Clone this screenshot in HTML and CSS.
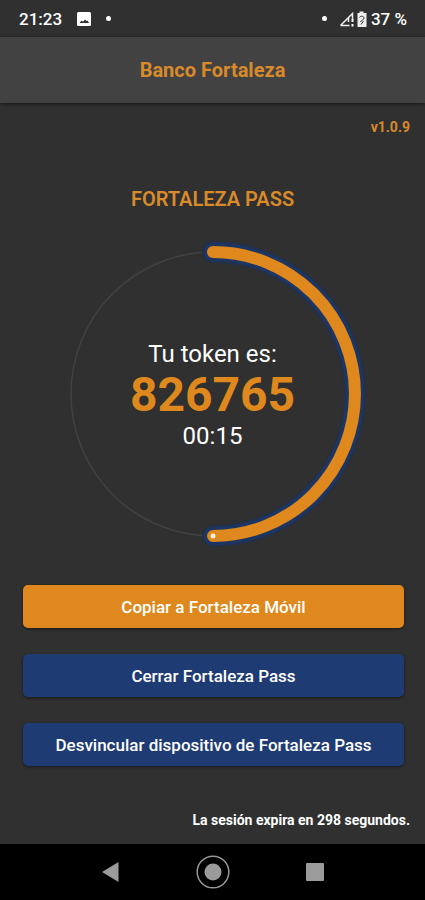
FILE: index.html
```html
<!DOCTYPE html>
<html lang="es">
<head>
<meta charset="utf-8">
<meta name="viewport" content="width=device-width, initial-scale=1">
<title>Banco Fortaleza</title>
<link rel="stylesheet" href="styles.css">
</head>
<body>
<div class="status-bar">
  <div class="status-group">
    <span>21:23</span>
    <svg class="photo-icon" viewBox="0 0 16 16" width="16" height="16" aria-hidden="true"><rect x="1" y="1" width="14" height="14" rx="1.500" fill="#fff"/><path d="M3.500 12l2-2.500 1.500 1.200 2-2.200 1.500 1.500 1-.5 1.500 2.500z" fill="#303030"/></svg>
    <span class="dot"></span>
  </div>
  <div class="status-group status-right">
    <span class="dot"></span>
    <svg class="signal-icon" viewBox="0 0 28 16" width="28" height="16" aria-hidden="true">
      <path d="M1.500 14.500L13.500 2.500v6M1.500 14.500H10.500M9.500 7v4" fill="none" stroke="#eee" stroke-width="1.500"/>
      <path d="M13.500 8v3M13.500 13v2.500" stroke="#fff" stroke-width="2"/>
      <path d="M20.500 .5h4V2H27.500V16h-9V2h2z" fill="#eee"/>
      <path d="M20.500 6.500c1-2 4.500-1.500 4.500 .5S22.500 8.500 21.500 11M24.500 10l-2.500 3.500" fill="none" stroke="#303030" stroke-width="1"/>
    </svg>
    <span>37 %</span>
  </div>
</div>
<header class="app-bar"><h1>Banco Fortaleza</h1></header>
<main class="content">
  <p class="version">v1.0.9</p>
  <h2 class="title">FORTALEZA PASS</h2>
  <section class="token">
    <svg class="ring" viewBox="0 0 310 310" aria-hidden="true">
      <circle cx="155" cy="155" r="142" fill="none" stroke="#424242" stroke-width="1.500"/>
      <g fill="none" stroke-linecap="round">
        <path d="M155 13a142 142 0 0 1 0 284" stroke="#253043" stroke-width="22"/>
        <path d="M155 13a142 142 0 0 1 0 284" stroke="#1d3562" stroke-width="19"/>
        <path d="M155 13a142 142 0 0 1 0 284" stroke="#de881d" stroke-width="12"/>
      </g>
      <circle cx="155" cy="297" r="2.500" fill="#fff0d8"/>
    </svg>
    <div class="token-text">
      <p class="token-label">Tu token es:</p>
      <p class="token-code">826765</p>
      <p class="token-label">00:15</p>
    </div>
  </section>
  <div class="actions">
    <button class="button primary" type="button">Copiar a Fortaleza Móvil</button>
    <button class="button" type="button">Cerrar Fortaleza Pass</button>
    <button class="button" type="button">Desvincular dispositivo de Fortaleza Pass</button>
  </div>
  <p class="session">La sesión expira en 298 segundos.</p>
</main>
<nav class="nav-bar">
  <button class="nav-button" type="button" aria-label="Atrás"><svg viewBox="0 0 36 36" width="36" height="36"><path d="M9 18L25.500 8v20z" fill="#9b9b9b"/></svg></button>
  <button class="nav-button" type="button" aria-label="Inicio"><svg viewBox="0 0 36 36" width="36" height="36"><circle cx="18" cy="18" r="15.800" fill="none" stroke="#999" stroke-width="1.500"/><circle cx="18" cy="18" r="8.500" fill="#9b9b9b"/></svg></button>
  <button class="nav-button" type="button" aria-label="Recientes"><svg viewBox="0 0 36 36" width="36" height="36"><rect x="9" y="9" width="18" height="18" rx="1" fill="#9b9b9b"/></svg></button>
</nav>
</body>
</html>
```
FILE: styles.css
```css
* { box-sizing: border-box; }
body {
  margin: 0;
  min-height: 100vh;
  display: flex;
  flex-direction: column;
  background: #303030;
  color: #fff;
  font-family: Roboto, sans-serif;
}
h1, h2, p { margin: 0; }
.status-bar {
  display: flex;
  justify-content: space-between;
  align-items: center;
  height: 37px;
  padding: 0 18px 0 19px;
  font-size: 17px;
  font-weight: 500;
}
.status-group { display: flex; align-items: center; gap: 14px; }
.status-right { gap: 12px; }
.status-right .signal-icon { margin-right: -8px; }
.dot { width: 5px; height: 5px; border-radius: 50%; background: #fff; }
.app-bar {
  display: flex;
  align-items: center;
  justify-content: center;
  height: 66px;
  background: #424242;
  box-shadow: 0 1px 4px rgba(0, 0, 0, 0.6);
}
h1 { font-size: 20px; line-height: 24px; font-weight: 700; color: #d98a2b; }
.content { flex: 1; display: flex; flex-direction: column; }
.version {
  padding: 16px 15px 0;
  text-align: right;
  font-size: 14px;
  line-height: 16px;
  font-weight: 700;
  color: #d98a2b;
}
.title {
  margin-top: 52px;
  text-align: center;
  font-size: 20px;
  line-height: 24px;
  font-weight: 600;
  color: #d98a2b;
}
.token { display: grid; place-items: center; margin-top: 28px; }
.token > * { grid-area: 1 / 1; }
.ring { width: 310px; height: 310px; }
.token-text { padding-top: 2px; text-align: center; }
.token-label { font-size: 24px; line-height: 30px; }
.token-code { font-size: 48px; line-height: 52px; font-weight: 700; color: #de881d; }
.actions { display: grid; gap: 26px; margin-top: 36px; padding: 0 21px 0 23px; }
.button {
  height: 43px;
  border: 0;
  border-radius: 5px;
  background: #1f3b73;
  color: #fff;
  font: 500 17px/20px Roboto, sans-serif;
  box-shadow: 0 1px 3px rgba(0, 0, 0, 0.5);
}
.button.primary { background: #de881d; }
.session {
  margin-top: auto;
  padding: 0 15px 16px;
  text-align: right;
  font-size: 14px;
  line-height: 16px;
  font-weight: 700;
}
.nav-bar {
  display: flex;
  align-items: center;
  justify-content: center;
  gap: 66px;
  height: 56px;
  background: #000;
}
.nav-button { display: flex; padding: 0; border: 0; background: none; }
```
